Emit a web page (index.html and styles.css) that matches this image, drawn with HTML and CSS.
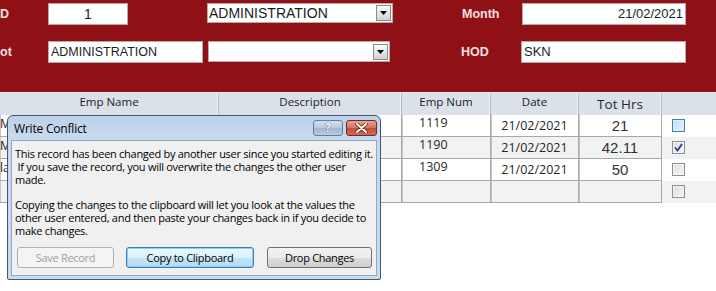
FILE: index.html
```html
<!DOCTYPE html>
<html lang="en">
  <head>
    <meta charset="UTF-8" />
    <title>Timesheet</title>
    <link rel="stylesheet" href="styles.css">
  </head>
  <body>
    <div id="form">
      <div class="form-header">
        <div class="field-row row-top">
          <span class="field-label label-left">D</span>
          <div class="text-box box-id">1</div>
          <div class="combo-box combo-top">
            <span class="combo-value">ADMINISTRATION</span>
            <span class="combo-button"><svg width="7" height="4" viewBox="0 0 7 4"><path d="M0 0h7L3.5 4z" fill="#000"/></svg></span>
          </div>
          <span class="field-label label-right">Month</span>
          <div class="text-box box-month">21/02/2021</div>
        </div>
        <div class="field-row row-bottom">
          <span class="field-label label-left">ot</span>
          <div class="text-box box-dept">ADMINISTRATION</div>
          <div class="combo-box combo-bottom">
            <span class="combo-value"></span>
            <span class="combo-button"><svg width="7" height="4" viewBox="0 0 7 4"><path d="M0 0h7L3.5 4z" fill="#000"/></svg></span>
          </div>
          <span class="field-label label-right">HOD</span>
          <div class="text-box box-hod">SKN</div>
        </div>
      </div>

      <div class="sheet">
        <div class="sheet-head">
          <div class="head-cell">Emp Name</div>
          <div class="head-cell">Description</div>
          <div class="head-cell">Emp Num</div>
          <div class="head-cell">Date</div>
          <div class="head-cell head-big">Tot Hrs</div>
          <div class="head-cell head-last"></div>
        </div>
        <div class="sheet-row">
          <div class="cell cell-name">M</div>
          <div class="cell"></div>
          <div class="cell cell-num">1119</div>
          <div class="cell cell-date">21/02/2021</div>
          <div class="cell cell-hrs">21</div>
          <div class="cell-check"><span class="check check-hover"></span></div>
        </div>
        <div class="sheet-row row-alt">
          <div class="cell cell-name">M</div>
          <div class="cell"></div>
          <div class="cell cell-num">1190</div>
          <div class="cell cell-date">21/02/2021</div>
          <div class="cell cell-hrs">42.11</div>
          <div class="cell-check"><span class="check"><svg width="9" height="9" viewBox="0 0 9 9"><path d="M1 4.5l2.5 3L8 1" fill="none" stroke="#2b3a8c" stroke-width="1.8"/></svg></span></div>
        </div>
        <div class="sheet-row">
          <div class="cell cell-name">la</div>
          <div class="cell"></div>
          <div class="cell cell-num">1309</div>
          <div class="cell cell-date">21/02/2021</div>
          <div class="cell cell-hrs">50</div>
          <div class="cell-check"><span class="check"></span></div>
        </div>
        <div class="sheet-row row-alt">
          <div class="cell cell-name"></div>
          <div class="cell"></div>
          <div class="cell"></div>
          <div class="cell"></div>
          <div class="cell"></div>
          <div class="cell-check"><span class="check"></span></div>
        </div>
      </div>

      <div class="dialog">
        <div class="dialog-title">
          <span class="dialog-caption">Write Conflict</span>
          <span class="title-button help-button">?</span>
          <span class="title-button close-button"><svg width="13" height="10" viewBox="0 0 13 10"><path d="M2 1l9 8M11 1l-9 8" stroke="#5a1a14" stroke-width="3.4" stroke-linecap="round"/><path d="M2 1l9 8M11 1l-9 8" stroke="#fff" stroke-width="2" stroke-linecap="round"/></svg></span>
        </div>
        <div class="dialog-body">
          <p class="para-first">This record has been changed by another user since you started editing it.<br/>&nbsp;If you save the record, you will overwrite the changes the other user<br/>made.</p>
          <p class="para-last">Copying the changes to the clipboard will let you look at the values the<br/>other user entered, and then paste your changes back in if you decide to<br/>make changes.</p>
          <div class="dialog-buttons">
            <button class="win-button save-button" disabled>Save Record</button>
            <button class="win-button copy-button">Copy to Clipboard</button>
            <button class="win-button drop-button">Drop Changes</button>
          </div>
        </div>
      </div>
    </div>
  </body>
</html>
```

FILE: styles.css
```css
body {
  margin: 0;
  width: 716px;
  height: 291px;
  overflow: hidden;
  background: #FFFFFF;
  font-family: "Liberation Sans", Arial, sans-serif;
}

#form {
  position: relative;
  width: 716px;
  height: 291px;
}

/* red form header */

.form-header {
  height: 93px;
  background: #8f1116;
  border-bottom: 1px solid #ece9ea;
  padding-top: 3px;
  box-sizing: border-box;
}

.field-row {
  display: flex;
  align-items: flex-start;
}

.row-bottom {
  margin-top: 16px;
}

.field-label {
  font-weight: 700;
  font-size: 12.5px;
  color: #f4e0e0;
  line-height: 20px;
}

.label-left {
  width: 48px;
  padding-top: 1px;
}

.label-right {
  width: 60px;
  padding-top: 1px;
}

.text-box {
  height: 22px;
  box-sizing: border-box;
  background: #FFFFFF;
  border: 1px solid #b9a9aa;
  color: #1c1c1c;
  font-size: 13px;
  line-height: 20px;
  padding: 0 2px;
  white-space: nowrap;
}

.box-id {
  width: 80px;
  text-align: center;
  margin-right: 79px;
  font-size: 14px;
}

.box-month {
  width: 164px;
  text-align: right;
}

.box-dept {
  width: 155px;
  margin-right: 5px;
  font-size: 12.5px;
}

.box-hod {
  width: 165px;
}

.combo-box {
  display: flex;
  align-items: center;
  justify-content: space-between;
  height: 20px;
  box-sizing: border-box;
  background: #FFFFFF;
  border: 1px solid #b9a9aa;
  padding: 0 0 0 1px;
}

.combo-top {
  width: 186px;
  margin-right: 69px;
}

.combo-bottom {
  width: 182px;
  height: 21px;
  margin-right: 71px;
}

.combo-value {
  font-size: 14px;
  color: #1c1c1c;
  line-height: 18px;
}

.combo-button {
  display: flex;
  align-items: center;
  justify-content: center;
  width: 15px;
  height: 16px;
  box-sizing: border-box;
  margin-right: 1px;
  border: 1px solid #8a8a8a;
  background: linear-gradient(to bottom, #fbfbfb, #e4e4e4 55%, #d2d2d2);
}

/* datasheet */

.sheet-head,
.sheet-row {
  display: grid;
  grid-template-columns: 219px 183px 89px 88px 83px 54px;
}

.sheet-head {
  height: 22px;
  background: #dbe1e9;
}

.head-cell {
  border-right: 1px solid #b4bcc6;
  box-shadow: inset -1px 0 0 #eef1f5;
  text-align: center;
  font-family: "Open Sans", "Noto Sans", sans-serif;
  font-size: 11.5px;
  line-height: 18px;
  color: #1b1b1b;
}

.head-big {
  font-size: 13.5px;
  line-height: 22px;
  color: #2a2a2a;
}

.head-last {
  border-right: none;
  box-shadow: none;
}

.sheet-row {
  height: 22px;
}

.row-alt {
  background: #f2f2f2;
}

.cell {
  border: 1px solid #a9a9a9;
  border-top: none;
  border-left: none;
  box-shadow: inset 1px 0 0 #c8c8c8;
  overflow: hidden;
  white-space: nowrap;
  color: #262626;
}

.cell-name {
  font-family: "Open Sans", "Noto Sans", sans-serif;
  font-size: 12px;
  line-height: 18px;
}

.cell-num {
  font-family: "Open Sans", "Noto Sans", sans-serif;
  font-size: 12.5px;
  line-height: 16px;
  padding-left: 17px;
}

.cell-date {
  font-family: "Open Sans", "Noto Sans", sans-serif;
  font-size: 12.5px;
  line-height: 22px;
  text-align: center;
}

.cell-hrs {
  font-size: 15px;
  line-height: 21px;
  text-align: center;
  color: #333333;
}

.cell-check {
  display: flex;
  align-items: flex-start;
  padding: 4px 0 0 10px;
}

.check {
  display: flex;
  align-items: center;
  justify-content: center;
  width: 13px;
  height: 13px;
  box-sizing: border-box;
  border: 1px solid #8f8f8f;
  background: linear-gradient(135deg, #dcdcdc, #f8f8f8);
  box-shadow: inset 0 0 0 1px #f4f4f4;
}

.check-hover {
  border-color: #3c7fb1;
  background: linear-gradient(135deg, #b9def7, #e9f6fe);
  box-shadow: inset 0 0 0 1px #def0fc;
}

/* write conflict dialog */

.dialog {
  position: absolute;
  left: 7px;
  top: 115px;
  width: 374px;
  height: 165px;
  box-sizing: border-box;
  border: 1px solid #44576d;
  border-radius: 6px 6px 2px 2px;
  background: linear-gradient(to bottom, #bcd1ea, #c6d9ef 20px, #c9dbee);
  font-family: "Open Sans", "Noto Sans", sans-serif;
  color: #000000;
  display: flex;
  flex-direction: column;
}

.dialog-title {
  display: flex;
  align-items: flex-start;
  height: 24px;
  padding: 4px 3px 0 6px;
  box-sizing: border-box;
}

.dialog-caption {
  flex: 1;
  font-size: 12px;
  letter-spacing: -0.2px;
  line-height: 16px;
  padding-top: 1px;
}

.title-button {
  display: flex;
  align-items: center;
  justify-content: center;
  height: 16px;
  box-sizing: border-box;
  border: 1px solid #6b7f98;
  border-radius: 3px;
}

.help-button {
  width: 30px;
  margin-right: 3px;
  background: linear-gradient(to bottom, #d3e0ef, #b6c9e0 50%, #9fb6d2 51%, #b7cce3);
  color: #ffffff;
  font-weight: 700;
  font-size: 12px;
  line-height: 14px;
  text-shadow: 0 0 1px #44546a, 0 0 1px #44546a;
}

.close-button {
  width: 31px;
  border-color: #6e2a24;
  background: linear-gradient(to bottom, #e5a498, #d2705f 50%, #c24a38 51%, #d16b55);
}

.dialog-body {
  flex: 1;
  margin: 0 3px 3px 3px;
  background: #f0f0f0;
  border: 1px solid #94a8c0;
  padding: 6px 0 0 3px;
  font-size: 11px;
  letter-spacing: -0.28px;
  line-height: 13px;
}

.dialog-body p {
  white-space: nowrap;
}

.para-first {
  margin: 0 0 12px 0;
}

.para-last {
  margin: 0 0 10px 0;
}

.dialog-buttons {
  display: flex;
}

.win-button {
  height: 21px;
  box-sizing: border-box;
  border: 1px solid #707070;
  border-radius: 3px;
  background: linear-gradient(to bottom, #f2f2f2, #ebebeb 50%, #dddddd 51%, #cfcfcf);
  font-family: inherit;
  font-size: 11px;
  letter-spacing: -0.3px;
  color: #000000;
  padding: 0;
}

.save-button {
  width: 97px;
  margin-left: 2px;
  margin-right: 12px;
  border-color: #adb2b5;
  background: #f4f4f4;
  color: #a0a0a0;
}

.copy-button {
  width: 128px;
  margin-right: 13px;
  border-color: #3c7fb1;
  box-shadow: inset 0 0 0 1px #8ed0f5;
  background: linear-gradient(to bottom, #ecf7fd, #dbf0fb 50%, #c3e5f7 51%, #b3dcf3);
}

.drop-button {
  width: 105px;
}
```
